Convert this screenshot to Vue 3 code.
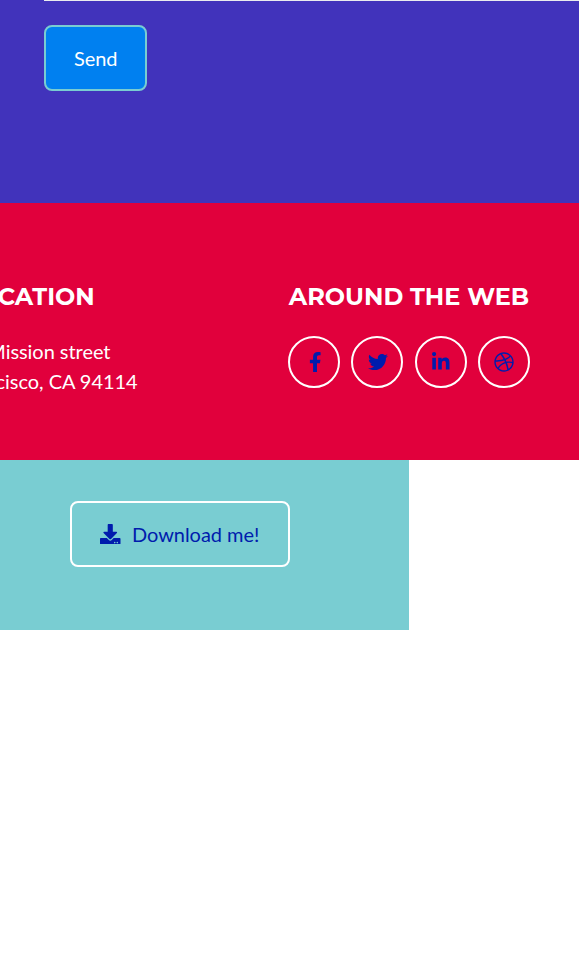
<script setup>
const socials = [
  {
    name: 'facebook',
    box: '0 0 320 512',
    width: 12.5,
    path: 'M279.14 288l14.22-92.66h-88.91v-60.13c0-25.35 12.42-50.06 52.24-50.06h40.42V6.26S260.43 0 225.36 0c-73.22 0-121.08 44.38-121.08 124.72v70.62H22.89V288h81.39v224h100.17V288z',
  },
  {
    name: 'twitter',
    box: '0 0 512 512',
    width: 20,
    path: 'M459.37 151.716c.325 4.548.325 9.097.325 13.645 0 138.72-105.583 298.558-298.558 298.558-59.452 0-114.68-17.219-161.137-47.106 8.447.974 16.568 1.299 25.34 1.299 49.055 0 94.213-16.568 130.274-44.832-46.132-.975-84.792-31.188-98.112-72.772 6.498.974 12.995 1.624 19.818 1.624 9.421 0 18.843-1.3 27.614-3.573-48.081-9.747-84.143-51.98-84.143-102.985v-1.299c13.969 7.797 30.214 12.67 47.431 13.319-28.264-18.843-46.781-51.005-46.781-87.391 0-19.492 5.197-37.36 14.294-52.954 51.655 63.675 129.3 105.258 216.365 109.807-1.624-7.797-2.599-15.918-2.599-24.04 0-57.828 46.782-104.934 104.934-104.934 30.213 0 57.502 12.67 76.67 33.137 23.715-4.548 46.456-13.32 66.599-25.34-7.798 24.366-24.366 44.833-46.132 57.827 21.117-2.273 41.584-8.122 60.426-16.243-14.292 20.791-32.161 39.308-52.628 54.253z',
  },
  {
    name: 'linkedin',
    box: '0 0 448 512',
    width: 17.5,
    path: 'M100.28 448H7.4V148.9h92.88zM53.79 108.1C24.09 108.1 0 83.5 0 53.8a53.79 53.79 0 0 1 107.58 0c0 29.7-24.1 54.3-53.79 54.3zM447.9 448h-92.68V302.4c0-34.7-.7-79.2-48.29-79.2-48.29 0-55.69 37.7-55.69 76.7V448h-92.78V148.9h89.08v40.8h1.3c12.4-23.5 42.69-48.3 87.88-48.3 94 0 111.28 61.9 111.28 142.3V448z',
  },
  {
    name: 'dribbble',
    box: '0 0 512 512',
    width: 20,
    path: 'M256 8C119.252 8 8 119.252 8 256s111.252 248 248 248 248-111.252 248-248S392.748 8 256 8zm163.97 114.366c29.503 36.046 47.369 81.957 47.835 131.955-6.984-1.477-77.018-15.682-147.502-6.818-5.752-14.041-11.181-26.393-18.617-41.614 78.321-31.977 113.818-77.482 118.284-83.523zM396.421 97.87c-3.81 5.427-35.697 48.286-111.021 76.519-34.712-63.776-73.185-116.168-79.04-124.008 67.176-16.193 137.966 1.27 190.061 47.489zm-230.48-33.25c5.585 7.659 43.438 60.116 78.537 122.509-99.087 26.313-186.36 25.934-195.834 25.809C62.38 147.205 106.678 92.573 165.941 64.62zM44.17 256.323c0-2.166.043-4.322.108-6.473 9.268.19 111.92 1.513 217.706-30.146 6.064 11.868 11.857 23.915 17.174 35.949-76.599 21.575-146.194 83.527-180.531 142.306C64.794 360.405 44.17 310.73 44.17 256.323zm81.807 167.113c22.127-45.233 82.178-103.622 167.579-132.756 29.74 77.283 42.039 142.053 45.189 160.638-68.112 29.013-150.015 21.053-212.768-27.882zm248.38 8.489c-2.171-12.886-13.446-74.897-41.152-151.033 66.38-10.626 124.7 6.768 131.947 9.055-9.442 58.941-43.273 109.844-90.795 141.978z',
  },
]
const downloadPath =
  'M216 0h80c13.3 0 24 10.7 24 24v168h87.7c17.8 0 26.7 21.5 14.1 34.1L269.7 378.3c-7.5 7.5-19.8 7.5-27.3 0L90.1 226.1c-12.6-12.6-3.7-34.1 14.1-34.1H192V24c0-13.3 10.7-24 24-24zm296 376v112c0 13.3-10.7 24-24 24H24c-13.3 0-24-10.7-24-24V376c0-13.3 10.7-24 24-24h146.7l49 49c20.1 20.1 52.5 20.1 72.6 0l49-49H488c13.3 0 24 10.7 24 24zm-124 88c0-11-9-20-20-20s-20 9-20 20 9 20 20 20 20-9 20-20zm64 0c0-11-9-20-20-20s-20 9-20 20 9 20 20 20 20-9 20-20z'
</script>

<template>
  <div class="page">
    <section class="contact">
      <div class="field-line"></div>
      <button class="btn send" type="button">Send</button>
    </section>

    <footer class="footer">
      <div class="location">
        <h4 class="title">LOCATION</h4>
        <p class="address">350 Mission street<br />San Francisco, CA 94114</p>
      </div>
      <div class="web">
        <h4 class="title">AROUND THE WEB</h4>
        <div class="socials">
          <a v-for="s in socials" :key="s.name" class="social" :class="s.name">
            <svg :viewBox="s.box" :width="s.width" height="20"><path :d="s.path" /></svg>
          </a>
        </div>
      </div>
    </footer>

    <section class="download">
      <button class="btn get" type="button">
        <svg viewBox="0 0 512 512" width="20.5" height="20.5"><path :d="downloadPath" /></svg>
        <span>Download me!</span>
      </button>
    </section>
  </div>
</template>

<style>
body {
  margin: 0;
  background: #fff;
}
</style>

<style scoped>
.page {
  width: 100%;
  height: 962px;
  overflow: hidden;
  font-family: Lato, 'Liberation Sans', sans-serif;
  font-size: 20px;
  line-height: 30px;
  letter-spacing: -0.05px;
  color: #fff;
}
.contact {
  box-sizing: border-box;
  height: 203px;
  padding-left: 44px;
  background: #4133bb;
}
.field-line {
  height: 1px;
  margin-bottom: 24px;
  background: #e9ecef;
}
.btn {
  box-sizing: border-box;
  display: flex;
  align-items: center;
  height: 66px;
  padding: 0 28px;
  border: 2px solid #fff;
  border-radius: 8px;
  font: inherit;
  letter-spacing: inherit;
  white-space: nowrap;
}
.send {
  width: 103px;
  background: #0080f0;
  border-color: #79cdd2;
  color: #fff;
}
.footer {
  box-sizing: border-box;
  display: flex;
  justify-content: space-between;
  height: 257px;
  padding: 79px 49px 0 0;
  background: #e1003c;
}
.location {
  width: 260px;
  margin-left: -101px;
  text-align: center;
}
.title {
  margin: 0 0 25px;
  font: 700 24px/29px Montserrat, Inter, sans-serif;
  letter-spacing: 0;
  text-align: center;
  white-space: nowrap;
}
.address {
  margin: 0;
  white-space: nowrap;
}
.web {
  width: 242px;
}
.socials {
  display: flex;
  justify-content: space-between;
}
.social {
  box-sizing: border-box;
  display: flex;
  align-items: center;
  justify-content: center;
  width: 52px;
  height: 52px;
  border: 2px solid #fff;
  border-radius: 50%;
}
.facebook,
.twitter {
  padding-left: 1.6px;
}
.linkedin {
  padding-left: 0.6px;
}
svg {
  display: block;
  flex: none;
  fill: #001cad;
}
.download {
  box-sizing: border-box;
  width: 409px;
  height: 170px;
  padding: 41px 0 0 70px;
  background: #79cdd2;
}
.get {
  width: 220px;
  gap: 11.5px;
  background: transparent;
  color: #001cad;
}
</style>
